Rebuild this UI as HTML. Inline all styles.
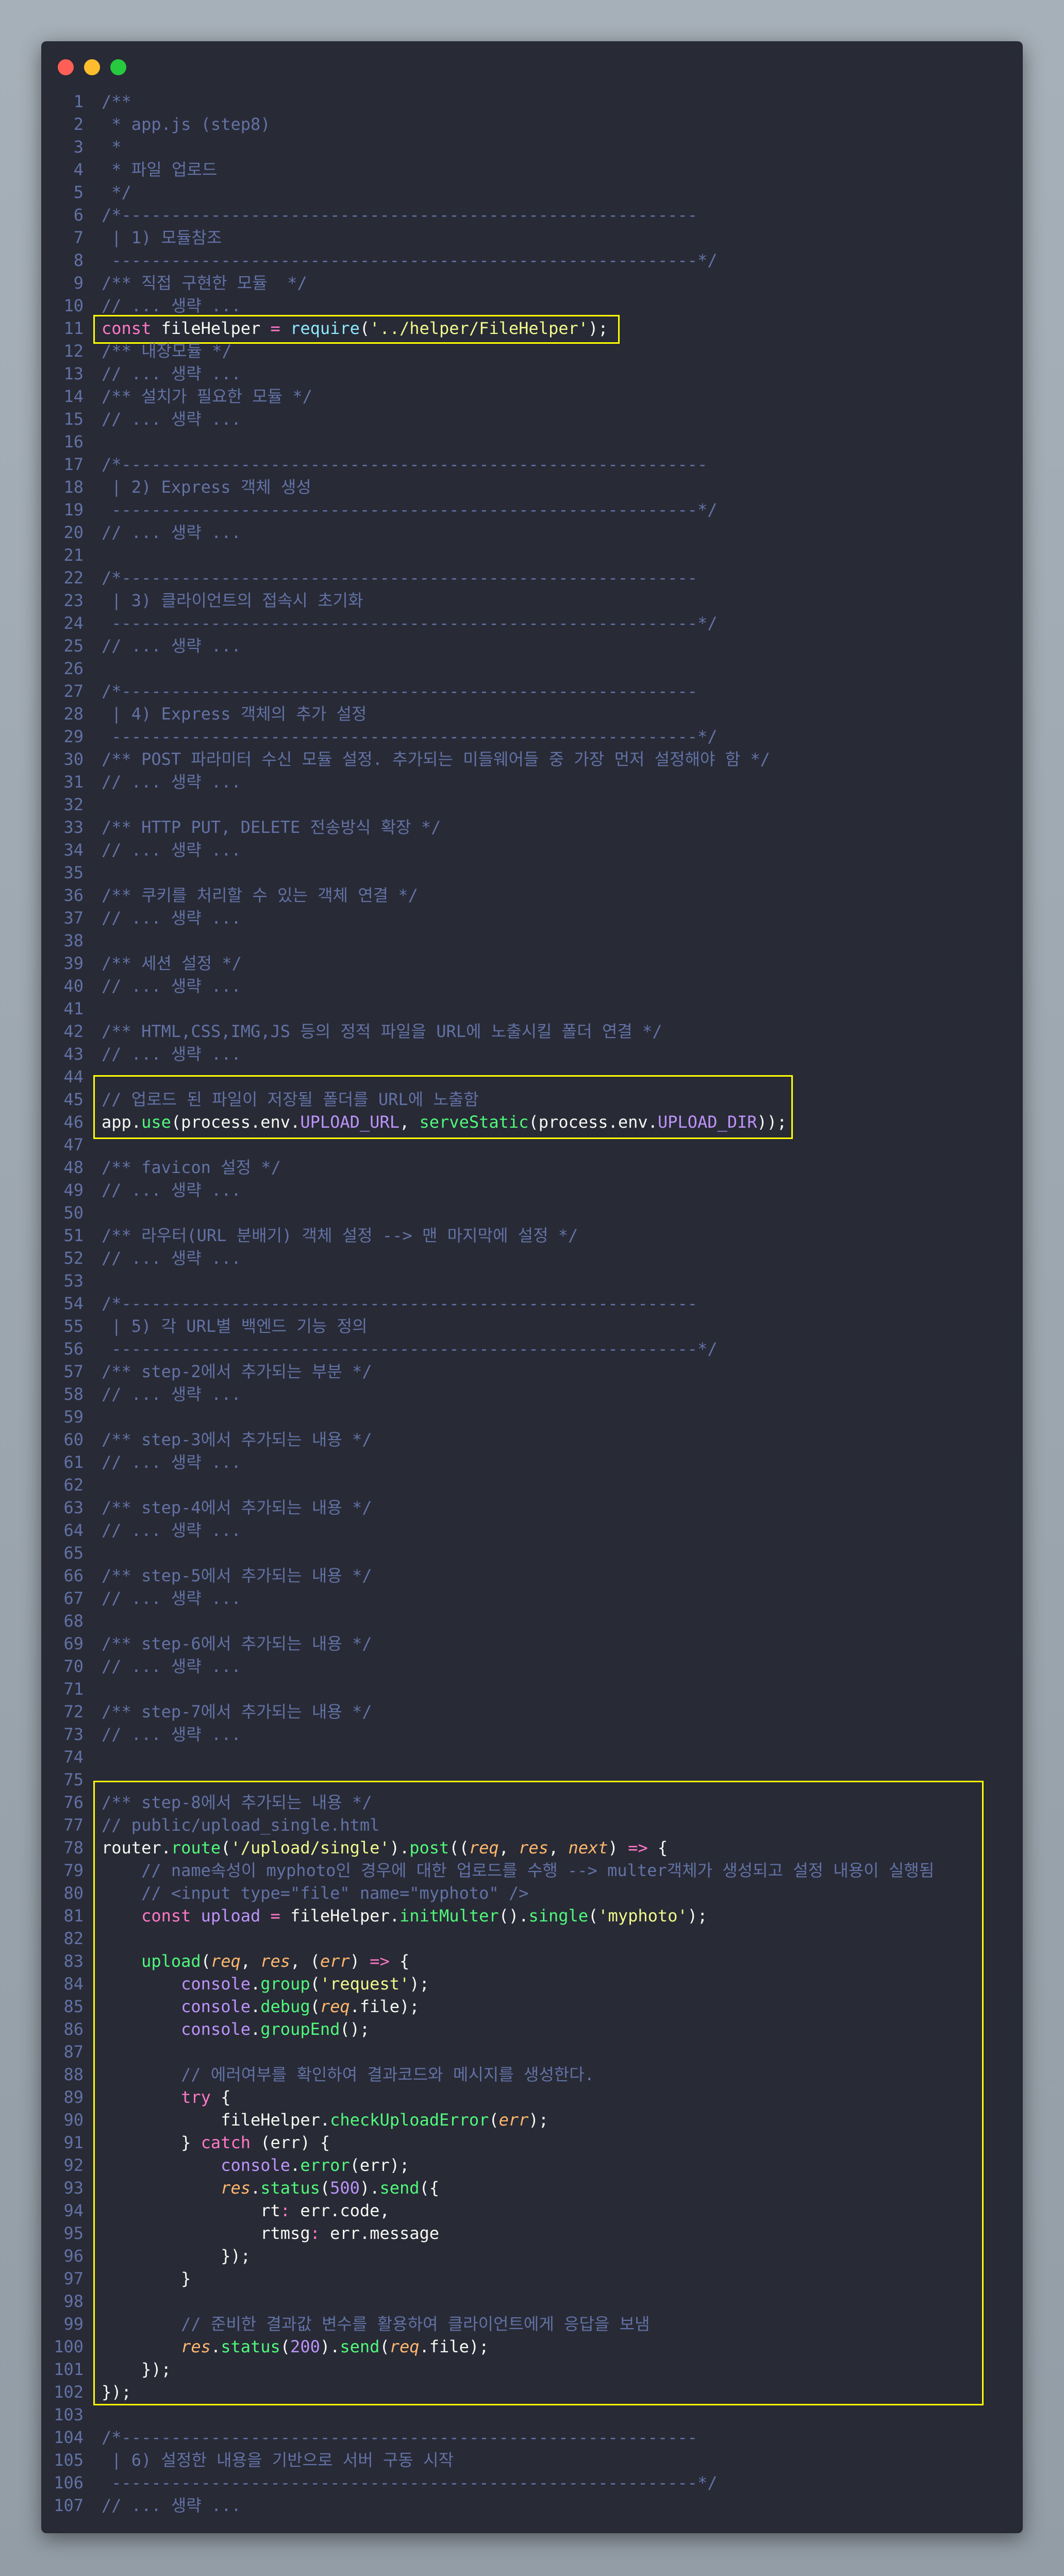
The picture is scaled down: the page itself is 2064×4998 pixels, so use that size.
<!DOCTYPE html>
<html><head><meta charset="utf-8">
<style>
html,body{margin:0;padding:0}
body{width:2064px;height:4998px;background:linear-gradient(180deg,#a6b0b8,#939da6);position:relative;overflow:hidden}
.win{position:absolute;left:80px;top:80px;width:1904px;height:4835px;background:#282a36;border-radius:10px;box-shadow:0 10px 40px rgba(0,0,0,.45)}
.dot{position:absolute;top:115px;width:31px;height:31px;border-radius:50%}
.code{position:absolute;left:0;top:175px;font-family:"DejaVu Sans Mono","Liberation Mono","Noto Sans CJK KR",monospace;font-size:32px;color:#f8f8f2}
.l{height:44px;line-height:44px;white-space:pre;position:relative}
.n{position:absolute;left:0;width:162px;text-align:right;color:#6272a4}
.t{position:absolute;left:197px}
.c{color:#6272a4}.k{color:#ff79c6}.f{color:#50fa7b}.cy{color:#8be9fd}.s{color:#f1fa8c}.p{color:#bd93f9}.o{color:#ffb86c;font-style:italic}
.box{position:absolute;border:3px solid #ffff00;box-sizing:border-box}
</style></head><body>
<div class="win"></div>
<div class="dot" style="left:112px;background:#ff5f56"></div>
<div class="dot" style="left:163px;background:#ffbd2e"></div>
<div class="dot" style="left:214px;background:#27c93f"></div>
<div class="box" style="left:181px;top:611px;width:1021px;height:56px"></div>
<div class="box" style="left:181px;top:2086px;width:1357px;height:124px"></div>
<div class="box" style="left:181px;top:3455px;width:1727px;height:1212px"></div>
<div class="code">
<div class="l"><span class="n">1</span><span class="t c">/**</span></div>
<div class="l"><span class="n">2</span><span class="t c"> * app.js (step8)</span></div>
<div class="l"><span class="n">3</span><span class="t c"> *</span></div>
<div class="l"><span class="n">4</span><span class="t c"> * 파일 업로드</span></div>
<div class="l"><span class="n">5</span><span class="t c"> */</span></div>
<div class="l"><span class="n">6</span><span class="t c">/*----------------------------------------------------------</span></div>
<div class="l"><span class="n">7</span><span class="t c"> | 1) 모듈참조</span></div>
<div class="l"><span class="n">8</span><span class="t c"> -----------------------------------------------------------*/</span></div>
<div class="l"><span class="n">9</span><span class="t c">/** 직접 구현한 모듈  */</span></div>
<div class="l"><span class="n">10</span><span class="t c">// ... 생략 ...</span></div>
<div class="l"><span class="n">11</span><span class="t"><span class="k">const</span> fileHelper <span class="k">=</span> <span class="cy">require</span>(<span class="s">'../helper/FileHelper'</span>);</span></div>
<div class="l"><span class="n">12</span><span class="t c">/** 내장모듈 */</span></div>
<div class="l"><span class="n">13</span><span class="t c">// ... 생략 ...</span></div>
<div class="l"><span class="n">14</span><span class="t c">/** 설치가 필요한 모듈 */</span></div>
<div class="l"><span class="n">15</span><span class="t c">// ... 생략 ...</span></div>
<div class="l"><span class="n">16</span><span class="t"></span></div>
<div class="l"><span class="n">17</span><span class="t c">/*-----------------------------------------------------------</span></div>
<div class="l"><span class="n">18</span><span class="t c"> | 2) Express 객체 생성</span></div>
<div class="l"><span class="n">19</span><span class="t c"> -----------------------------------------------------------*/</span></div>
<div class="l"><span class="n">20</span><span class="t c">// ... 생략 ...</span></div>
<div class="l"><span class="n">21</span><span class="t"></span></div>
<div class="l"><span class="n">22</span><span class="t c">/*----------------------------------------------------------</span></div>
<div class="l"><span class="n">23</span><span class="t c"> | 3) 클라이언트의 접속시 초기화</span></div>
<div class="l"><span class="n">24</span><span class="t c"> -----------------------------------------------------------*/</span></div>
<div class="l"><span class="n">25</span><span class="t c">// ... 생략 ...</span></div>
<div class="l"><span class="n">26</span><span class="t"></span></div>
<div class="l"><span class="n">27</span><span class="t c">/*----------------------------------------------------------</span></div>
<div class="l"><span class="n">28</span><span class="t c"> | 4) Express 객체의 추가 설정</span></div>
<div class="l"><span class="n">29</span><span class="t c"> -----------------------------------------------------------*/</span></div>
<div class="l"><span class="n">30</span><span class="t c">/** POST 파라미터 수신 모듈 설정. 추가되는 미들웨어들 중 가장 먼저 설정해야 함 */</span></div>
<div class="l"><span class="n">31</span><span class="t c">// ... 생략 ...</span></div>
<div class="l"><span class="n">32</span><span class="t"></span></div>
<div class="l"><span class="n">33</span><span class="t c">/** HTTP PUT, DELETE 전송방식 확장 */</span></div>
<div class="l"><span class="n">34</span><span class="t c">// ... 생략 ...</span></div>
<div class="l"><span class="n">35</span><span class="t"></span></div>
<div class="l"><span class="n">36</span><span class="t c">/** 쿠키를 처리할 수 있는 객체 연결 */</span></div>
<div class="l"><span class="n">37</span><span class="t c">// ... 생략 ...</span></div>
<div class="l"><span class="n">38</span><span class="t"></span></div>
<div class="l"><span class="n">39</span><span class="t c">/** 세션 설정 */</span></div>
<div class="l"><span class="n">40</span><span class="t c">// ... 생략 ...</span></div>
<div class="l"><span class="n">41</span><span class="t"></span></div>
<div class="l"><span class="n">42</span><span class="t c">/** HTML,CSS,IMG,JS 등의 정적 파일을 URL에 노출시킬 폴더 연결 */</span></div>
<div class="l"><span class="n">43</span><span class="t c">// ... 생략 ...</span></div>
<div class="l"><span class="n">44</span><span class="t"></span></div>
<div class="l"><span class="n">45</span><span class="t c">// 업로드 된 파일이 저장될 폴더를 URL에 노출함</span></div>
<div class="l"><span class="n">46</span><span class="t">app.<span class="f">use</span>(process.env.<span class="p">UPLOAD_URL</span>, <span class="f">serveStatic</span>(process.env.<span class="p">UPLOAD_DIR</span>));</span></div>
<div class="l"><span class="n">47</span><span class="t"></span></div>
<div class="l"><span class="n">48</span><span class="t c">/** favicon 설정 */</span></div>
<div class="l"><span class="n">49</span><span class="t c">// ... 생략 ...</span></div>
<div class="l"><span class="n">50</span><span class="t"></span></div>
<div class="l"><span class="n">51</span><span class="t c">/** 라우터(URL 분배기) 객체 설정 --> 맨 마지막에 설정 */</span></div>
<div class="l"><span class="n">52</span><span class="t c">// ... 생략 ...</span></div>
<div class="l"><span class="n">53</span><span class="t"></span></div>
<div class="l"><span class="n">54</span><span class="t c">/*----------------------------------------------------------</span></div>
<div class="l"><span class="n">55</span><span class="t c"> | 5) 각 URL별 백엔드 기능 정의</span></div>
<div class="l"><span class="n">56</span><span class="t c"> -----------------------------------------------------------*/</span></div>
<div class="l"><span class="n">57</span><span class="t c">/** step-2에서 추가되는 부분 */</span></div>
<div class="l"><span class="n">58</span><span class="t c">// ... 생략 ...</span></div>
<div class="l"><span class="n">59</span><span class="t"></span></div>
<div class="l"><span class="n">60</span><span class="t c">/** step-3에서 추가되는 내용 */</span></div>
<div class="l"><span class="n">61</span><span class="t c">// ... 생략 ...</span></div>
<div class="l"><span class="n">62</span><span class="t"></span></div>
<div class="l"><span class="n">63</span><span class="t c">/** step-4에서 추가되는 내용 */</span></div>
<div class="l"><span class="n">64</span><span class="t c">// ... 생략 ...</span></div>
<div class="l"><span class="n">65</span><span class="t"></span></div>
<div class="l"><span class="n">66</span><span class="t c">/** step-5에서 추가되는 내용 */</span></div>
<div class="l"><span class="n">67</span><span class="t c">// ... 생략 ...</span></div>
<div class="l"><span class="n">68</span><span class="t"></span></div>
<div class="l"><span class="n">69</span><span class="t c">/** step-6에서 추가되는 내용 */</span></div>
<div class="l"><span class="n">70</span><span class="t c">// ... 생략 ...</span></div>
<div class="l"><span class="n">71</span><span class="t"></span></div>
<div class="l"><span class="n">72</span><span class="t c">/** step-7에서 추가되는 내용 */</span></div>
<div class="l"><span class="n">73</span><span class="t c">// ... 생략 ...</span></div>
<div class="l"><span class="n">74</span><span class="t"></span></div>
<div class="l"><span class="n">75</span><span class="t"></span></div>
<div class="l"><span class="n">76</span><span class="t c">/** step-8에서 추가되는 내용 */</span></div>
<div class="l"><span class="n">77</span><span class="t c">// public/upload_single.html</span></div>
<div class="l"><span class="n">78</span><span class="t">router.<span class="f">route</span>(<span class="s">'/upload/single'</span>).<span class="f">post</span>((<span class="o">req</span>, <span class="o">res</span>, <span class="o">next</span>) <span class="k">=&gt;</span> {</span></div>
<div class="l"><span class="n">79</span><span class="t c">    // name속성이 myphoto인 경우에 대한 업로드를 수행 --> multer객체가 생성되고 설정 내용이 실행됨</span></div>
<div class="l"><span class="n">80</span><span class="t c">    // &lt;input type="file" name="myphoto" /&gt;</span></div>
<div class="l"><span class="n">81</span><span class="t">    <span class="k">const</span> <span class="p">upload</span> <span class="k">=</span> fileHelper.<span class="f">initMulter</span>().<span class="f">single</span>(<span class="s">'myphoto'</span>);</span></div>
<div class="l"><span class="n">82</span><span class="t"></span></div>
<div class="l"><span class="n">83</span><span class="t">    <span class="f">upload</span>(<span class="o">req</span>, <span class="o">res</span>, (<span class="o">err</span>) <span class="k">=&gt;</span> {</span></div>
<div class="l"><span class="n">84</span><span class="t">        <span class="p">console</span>.<span class="f">group</span>(<span class="s">'request'</span>);</span></div>
<div class="l"><span class="n">85</span><span class="t">        <span class="p">console</span>.<span class="f">debug</span>(<span class="o">req</span>.file);</span></div>
<div class="l"><span class="n">86</span><span class="t">        <span class="p">console</span>.<span class="f">groupEnd</span>();</span></div>
<div class="l"><span class="n">87</span><span class="t"></span></div>
<div class="l"><span class="n">88</span><span class="t c">        // 에러여부를 확인하여 결과코드와 메시지를 생성한다.</span></div>
<div class="l"><span class="n">89</span><span class="t">        <span class="k">try</span> {</span></div>
<div class="l"><span class="n">90</span><span class="t">            fileHelper.<span class="f">checkUploadError</span>(<span class="o">err</span>);</span></div>
<div class="l"><span class="n">91</span><span class="t">        } <span class="k">catch</span> (err) {</span></div>
<div class="l"><span class="n">92</span><span class="t">            <span class="p">console</span>.<span class="f">error</span>(err);</span></div>
<div class="l"><span class="n">93</span><span class="t">            <span class="o">res</span>.<span class="f">status</span>(<span class="p">500</span>).<span class="f">send</span>({</span></div>
<div class="l"><span class="n">94</span><span class="t">                rt<span class="k">:</span> err.code,</span></div>
<div class="l"><span class="n">95</span><span class="t">                rtmsg<span class="k">:</span> err.message</span></div>
<div class="l"><span class="n">96</span><span class="t">            });</span></div>
<div class="l"><span class="n">97</span><span class="t">        }</span></div>
<div class="l"><span class="n">98</span><span class="t"></span></div>
<div class="l"><span class="n">99</span><span class="t c">        // 준비한 결과값 변수를 활용하여 클라이언트에게 응답을 보냄</span></div>
<div class="l"><span class="n">100</span><span class="t">        <span class="o">res</span>.<span class="f">status</span>(<span class="p">200</span>).<span class="f">send</span>(<span class="o">req</span>.file);</span></div>
<div class="l"><span class="n">101</span><span class="t">    });</span></div>
<div class="l"><span class="n">102</span><span class="t">});</span></div>
<div class="l"><span class="n">103</span><span class="t"></span></div>
<div class="l"><span class="n">104</span><span class="t c">/*----------------------------------------------------------</span></div>
<div class="l"><span class="n">105</span><span class="t c"> | 6) 설정한 내용을 기반으로 서버 구동 시작</span></div>
<div class="l"><span class="n">106</span><span class="t c"> -----------------------------------------------------------*/</span></div>
<div class="l"><span class="n">107</span><span class="t c">// ... 생략 ...</span></div>
</div>
</body></html>
